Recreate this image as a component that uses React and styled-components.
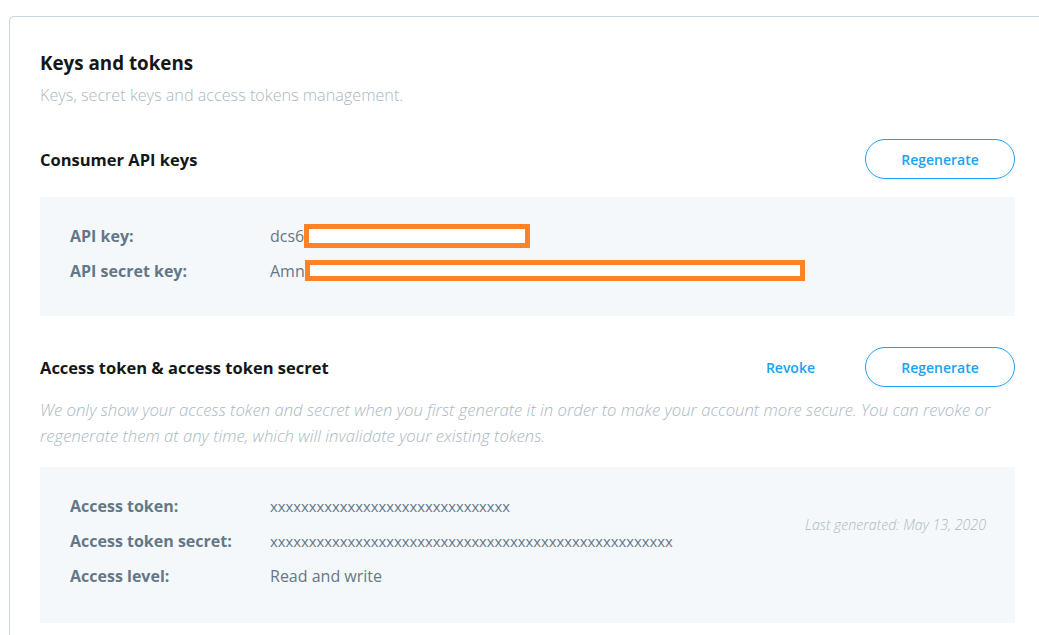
import React from "react";
import styled, { createGlobalStyle } from "styled-components";

const GlobalStyle = createGlobalStyle`
  html, body {
    margin: 0;
    padding: 0;
    background: #ffffff;
    font-family: "Open Sans", "Noto Sans", sans-serif;
    overflow: hidden;
  }
`;

const Page = styled.div`
  padding: 16px 0 0 9px;
  width: 1039px;
  box-sizing: border-box;
  overflow: hidden;
`;

const Card = styled.section`
  border: 1px solid #ccd6dd;
  border-right: none;
  border-radius: 5px 0 0 0;
  padding: 30px 0 40px 30px;
  width: 1100px;
  box-sizing: border-box;
`;

const Inner = styled.div`
  width: 975px;
`;

const Title = styled.h1`
  margin: 0;
  font-size: 18.8px;
  line-height: 32px;
  font-weight: 700;
  color: #14171a;
`;

const Subtitle = styled.p`
  margin: 6px 0 0;
  font-size: 16.2px;
  line-height: 20px;
  font-weight: 300;
  color: #aab8c2;
`;

const SectionHead = styled.div`
  display: flex;
  align-items: center;
  justify-content: space-between;
  margin-top: ${(p) => p.$top}px;
  height: 40px;
`;

const SectionTitle = styled.h2`
  margin: 0;
  font-size: 16.5px;
  font-weight: 700;
  color: #14171a;
`;

const Actions = styled.div`
  display: flex;
  align-items: center;
  gap: 50px;
`;

const LinkButton = styled.button`
  border: none;
  background: none;
  padding: 0;
  font-family: inherit;
  font-size: 14px;
  font-weight: 600;
  color: #1da1f2;
  cursor: pointer;
`;

const OutlineButton = styled.button`
  width: 150px;
  height: 40px;
  border: 1px solid #1da1f2;
  border-radius: 20px;
  background: #ffffff;
  font-family: inherit;
  font-size: 14px;
  font-weight: 600;
  color: #1da1f2;
  cursor: pointer;
`;

const Note = styled.p`
  margin: 10px 0 0;
  font-size: 16.7px;
  line-height: 26px;
  font-style: italic;
  font-weight: 300;
  color: #aab8c2;
`;

const Panel = styled.div`
  display: flex;
  justify-content: space-between;
  background: #f5f8fa;
  margin-top: ${(p) => p.$top}px;
  padding: 21px 29px ${(p) => p.$bottom}px 30px;
`;

const Rows = styled.div`
  display: flex;
  flex-direction: column;
`;

const Row = styled.div`
  display: grid;
  grid-template-columns: 200px auto;
  align-items: center;
  height: 35px;
`;

const Label = styled.span`
  font-size: 16px;
  font-weight: 700;
  color: #657786;
`;

const Value = styled.span`
  display: flex;
  align-items: center;
  font-size: 16px;
  color: #657786;
`;

const Masked = styled.span`
  font-size: 14.8px;
  color: #657786;
`;

const Redact = styled.span`
  display: inline-block;
  width: ${(p) => p.$w}px;
  height: ${(p) => p.$h}px;
  border: 5px solid #ff8326;
  background: #ffffff;
  box-sizing: border-box;
`;

const Stamp = styled.span`
  margin-top: 27px;
  font-size: 14.2px;
  font-style: italic;
  font-weight: 300;
  color: #aab8c2;
`;

export default function App() {
  return (
    <Page>
      <GlobalStyle />
      <Card>
        <Inner>
          <Title>Keys and tokens</Title>
          <Subtitle>Keys, secret keys and access tokens management.</Subtitle>

          <SectionHead $top={34}>
            <SectionTitle>Consumer API keys</SectionTitle>
            <OutlineButton>Regenerate</OutlineButton>
          </SectionHead>
          <Panel $top={18} $bottom={28}>
            <Rows>
              <Row>
                <Label>API key:</Label>
                <Value>
                  dcs6
                  <Redact $w={226} $h={24} />
                </Value>
              </Row>
              <Row>
                <Label>API secret key:</Label>
                <Value>
                  Amn
                  <Redact $w={500} $h={21} />
                </Value>
              </Row>
            </Rows>
          </Panel>

          <SectionHead $top={31}>
            <SectionTitle>Access token &amp; access token secret</SectionTitle>
            <Actions>
              <LinkButton>Revoke</LinkButton>
              <OutlineButton>Regenerate</OutlineButton>
            </Actions>
          </SectionHead>
          <Note>
            We only show your access token and secret when you first generate it
            in order to make your account more secure. You can revoke or
            regenerate them at any time, which will invalidate your existing
            tokens.
          </Note>
          <Panel $top={18} $bottom={30}>
            <Rows>
              <Row>
                <Label>Access token:</Label>
                <Masked>{"x".repeat(31)}</Masked>
              </Row>
              <Row>
                <Label>Access token secret:</Label>
                <Masked>{"x".repeat(52)}</Masked>
              </Row>
              <Row>
                <Label>Access level:</Label>
                <Value>Read and write</Value>
              </Row>
            </Rows>
            <Stamp>Last generated: May 13, 2020</Stamp>
          </Panel>
        </Inner>
      </Card>
    </Page>
  );
}
